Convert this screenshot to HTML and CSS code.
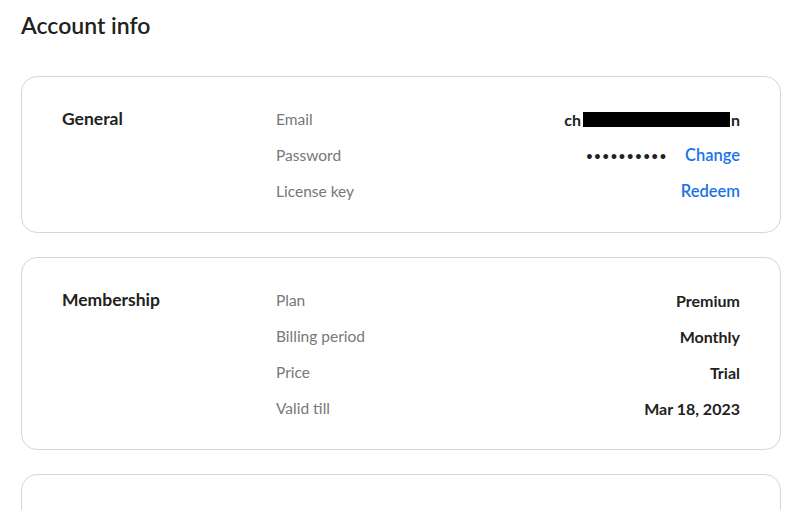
FILE: index.html
```html
<!DOCTYPE html>
<html lang="en">
<head>
  <meta charset="UTF-8" />
  <meta name="viewport" content="width=device-width, initial-scale=1.0" />
  <title>Account info</title>
  <link rel="stylesheet" href="styles.css">
</head>
<body>
  <h1>Account info</h1>

  <div class="card">
    <div class="section">General</div>
    <div class="rows">
      <div class="row">
        <span class="label">Email</span>
        <span class="value">ch<span class="redact"></span>n</span>
      </div>
      <div class="row">
        <span class="label">Password</span>
        <span class="value"><span class="dots">••••••••••</span><a class="link" href="#">Change</a></span>
      </div>
      <div class="row">
        <span class="label">License key</span>
        <span class="value"><a class="link" href="#">Redeem</a></span>
      </div>
    </div>
  </div>

  <div class="card">
    <div class="section">Membership</div>
    <div class="rows">
      <div class="row">
        <span class="label">Plan</span>
        <span class="value">Premium</span>
      </div>
      <div class="row">
        <span class="label">Billing period</span>
        <span class="value">Monthly</span>
      </div>
      <div class="row">
        <span class="label">Price</span>
        <span class="value">Trial</span>
      </div>
      <div class="row">
        <span class="label">Valid till</span>
        <span class="value">Mar 18, 2023</span>
      </div>
    </div>
  </div>

  <div class="card empty"></div>
</body>
</html>
```

FILE: styles.css
```css
body {
  font-family: Lato, "Liberation Sans", sans-serif;
  background-color: #fff;
  color: #222;
  margin: 0;
  padding: 0 9px 0 21px;
}
h1 {
  font-size: 23px;
  font-weight: 600;
  margin: 0;
  padding: 11px 0 0;
  height: 76px;
  box-sizing: border-box;
}
.card {
  display: flex;
  border: 1px solid #d6d6d6;
  border-radius: 16px;
  padding: 24px 40px 23px 40px;
  margin-bottom: 24px;
}
.card.empty {
  height: 60px;
}
.section {
  width: 214px;
  flex-shrink: 0;
  font-size: 17.5px;
  font-weight: 700;
  line-height: 36px;
}
.rows {
  flex: 1;
}
.row {
  display: flex;
  justify-content: space-between;
  align-items: center;
  height: 36px;
  font-size: 15.5px;
}
.label {
  color: #777;
}
.value {
  font-weight: 700;
  font-size: 16px;
  display: flex;
  align-items: center;
}
.redact {
  display: inline-block;
  width: 147px;
  height: 15px;
  margin: 0 1px 0 2px;
  background: #000;
}
.dots {
  font-size: 11px;
  letter-spacing: 1.8px;
  margin-right: 17px;
}
.link {
  color: #1a73e8;
  font-weight: 600;
  font-size: 16.5px;
  text-decoration: none;
}
```
